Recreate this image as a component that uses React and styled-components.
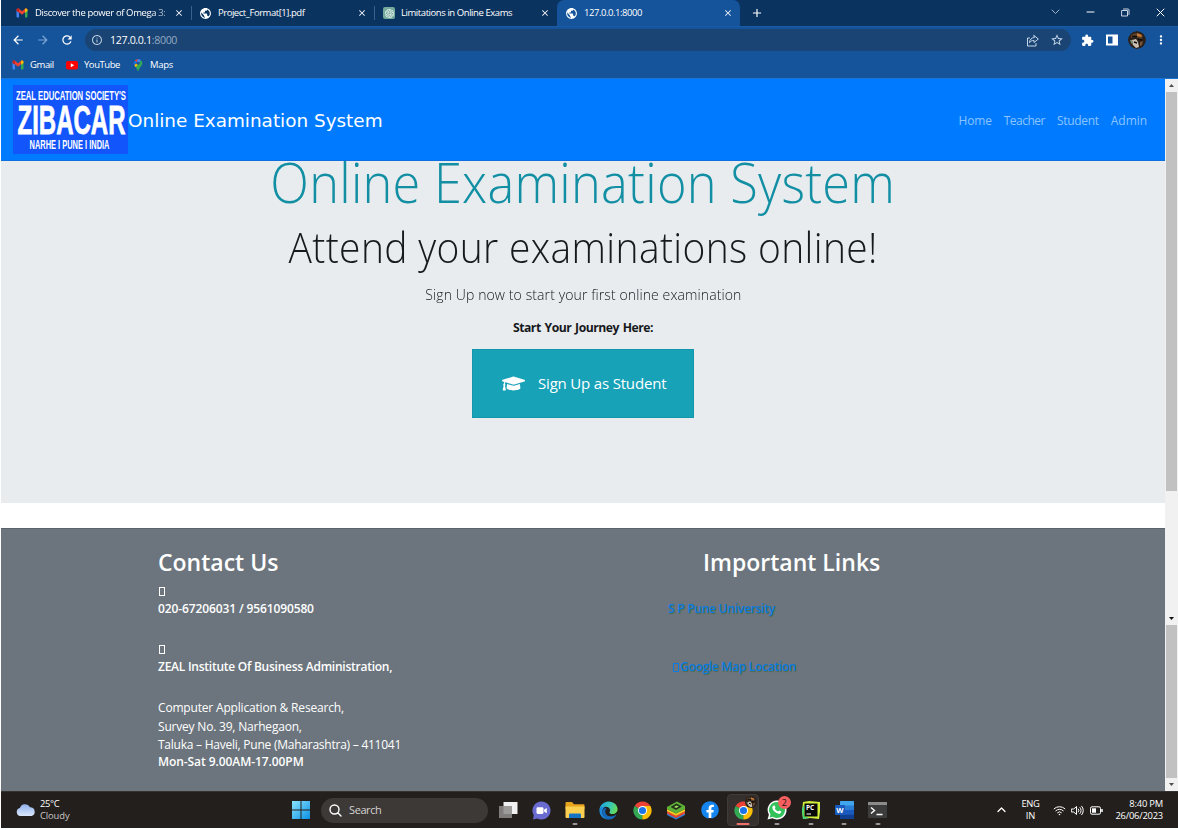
import React from "react";
import styled, { createGlobalStyle, css } from "styled-components";
import {
  MdPublic, MdArrowBack, MdArrowForward, MdRefresh, MdInfoOutline,
  MdStarBorder, MdExtension, MdMoreVert, MdClose, MdAdd,
} from "react-icons/md";
import { FaGraduationCap, FaFacebook } from "react-icons/fa";
import { SiOpenai } from "react-icons/si";

const UI = `"Open Sans", "Noto Sans", sans-serif`;

const Global = createGlobalStyle`
  *, *::before, *::after { box-sizing: border-box; }
  body { margin: 0; background: #fff; font-family: ${UI}; overflow: hidden; }
  svg { display: block; flex: none; }
`;

const Desktop = styled.div`
  width: 1178px;
  height: 830px;
  padding: 0 0 2px 1px;
  display: flex;
  flex-direction: column;
  overflow: hidden;
  white-space: nowrap;
`;

const Label = styled.span`
  font-size: ${(p) => p.$size}px;
  font-weight: ${(p) => p.$weight || 400};
  letter-spacing: ${(p) => p.$track || 0}px;
  color: ${(p) => p.$color || "inherit"};
  line-height: 1.2;
`;

/* ---------- browser chrome ---------- */

const TabStrip = styled.div`
  height: 26px;
  display: flex;
  padding-left: 7px;
  background: #0b335f;
  color: #fff;
`;

const TabBox = styled.div`
  position: relative;
  width: 183px;
  height: 26px;
  padding: 0 7px 0 8px;
  display: flex;
  align-items: center;
  border-radius: 7px 7px 0 0;
  ${(p) => p.$active && css`background: #15539b;`}
  ${(p) => p.$divider && css`
    &::after {
      content: "";
      position: absolute;
      right: -1px;
      top: 6px;
      width: 1px;
      height: 14px;
      background: #3a618c;
    }
  `}
`;

const Favicon = styled.span`
  width: 12px;
  margin-right: 7px;
  flex: none;
`;

const TabTitle = styled.div`
  flex: 1;
  overflow: hidden;
  display: flex;
  ${(p) => p.$fade && css`mask-image: linear-gradient(to right, #000 84%, rgba(0, 0, 0, 0.4) 97%);`}
`;

const OpenAiTile = styled.span`
  display: grid;
  place-items: center;
  width: 12px;
  height: 12px;
  margin-left: 1px;
  border-radius: 2px;
  background: #74aa9c;
`;

const NewTab = styled.div`
  display: grid;
  place-items: center;
  width: 34px;
`;

const WindowButtons = styled.div`
  margin-left: auto;
  display: flex;
  height: 24px;
`;

const WindowButton = styled.div`
  width: 35px;
  display: grid;
  place-items: center;
`;

const Toolbar = styled.div`
  height: 27px;
  display: flex;
  align-items: center;
  background: #15539b;
  border-top: 1px solid #1a5ba5;
  color: #fff;
`;

const NavButtons = styled.div`
  display: flex;
  align-items: center;
  gap: 10.5px;
  width: 84px;
  padding-left: 10px;
`;

const AddressBar = styled.div`
  width: 986px;
  height: 22px;
  border-radius: 11px;
  background: #1a4473;
  display: flex;
  align-items: center;
  padding: 0 7px 0 6px;
`;

const AddressText = styled.div`
  flex: 1;
  padding: 0 0 4px 7px;
`;

const AddressActions = styled.div`
  display: flex;
  align-items: center;
  gap: 11px;
  color: #c5d6e8;
`;

const Extensions = styled.div`
  display: flex;
  align-items: center;
  gap: 11px;
  padding-left: 10px;
`;

const Avatar = styled.span`
  width: 18px;
  height: 18px;
  margin: 0 -3px 0 -1px;
  border-radius: 50%;
  overflow: hidden;
`;

const Bookmarks = styled.div`
  height: 26px;
  display: flex;
  align-items: center;
  padding: 0 0 1px 11px;
  color: #fff;
  background: #15539b;
  border-bottom: 1px solid #1b74d2;
`;

const Bookmark = styled.div`
  display: flex;
  align-items: center;
  gap: 6px;
  width: ${(p) => p.$width}px;
`;

/* ---------- page ---------- */

const Viewport = styled.div`
  height: 712px;
  display: flex;
`;

const Page = styled.main`
  width: 1164px;
  display: flex;
  flex-direction: column;
`;

const Navbar = styled.nav`
  height: 81.5px;
  flex: none;
  display: flex;
  align-items: center;
  padding: 0 18px 0 12px;
  background: #007bff;
  border-bottom: 1px solid #0d6fe0;
  color: #fff;
`;

const Brand = styled.span`
  font: 400 18.4px "DejaVu Sans", Verdana, sans-serif;
  padding-top: 2px;
`;

const NavLinks = styled.div`
  margin-left: auto;
  padding-top: 3px;
  display: flex;
  gap: 12px;
  color: #8cc4ff;
`;

const Hero = styled.section`
  height: 342.5px;
  flex: none;
  background: #e8ecef;
  display: flex;
  flex-direction: column;
  align-items: center;
  color: #17191c;
`;

const Title = styled.h1`
  margin: -15px 0 0;
  font-weight: 300;
  font-size: 56px;
  line-height: 70px;
  letter-spacing: 0.3px;
  transform: scaleX(0.901);
  color: #138fa4;
`;

const Subtitle = styled.h2`
  margin: 1px 0 0;
  font-weight: 300;
  font-size: 43px;
  line-height: 60px;
  letter-spacing: 0.4px;
  transform: scaleX(0.906);
`;

const Lead = styled.p`
  margin: 6.5px 0 0;
  font-weight: 300;
  font-size: 15.4px;
  line-height: 24px;
  letter-spacing: 0.1px;
  transform: scaleX(0.912);
`;

const Prompt = styled.p`
  margin: 11px 0 0;
  font-weight: 700;
  font-size: 12.2px;
  line-height: 20px;
  letter-spacing: -0.5px;
  word-spacing: 1.2px;
`;

const SignUp = styled.button`
  width: 222px;
  height: 69px;
  margin: 10.5px 0 0;
  padding: 0 0 0 29px;
  display: flex;
  align-items: center;
  gap: 13px;
  border: 1px solid #1296ab;
  background: #17a2b8;
  color: #fff;
  font-family: inherit;
`;

const Footer = styled.footer`
  margin-top: 24.5px;
  flex: 1;
  display: flex;
  background: #6c757d;
  border-top: 1px solid #5a636b;
  color: #fff;
  padding: 17px 0 0 157px;
`;

const FooterColumn = styled.div`
  width: ${(p) => p.$width}px;
  display: flex;
  flex-direction: column;
`;

const FooterHeading = styled.h3`
  margin: 0 0 0 ${(p) => p.$indent || 0}px;
  font-size: 23px;
  line-height: 32px;
  font-weight: 600;
`;

const FooterLine = styled.div`
  height: ${(p) => p.$height}px;
  margin-top: ${(p) => p.$top || 0}px;
  display: flex;
  align-items: center;
`;

const MissingGlyph = styled.span`
  width: 6px;
  height: 9px;
  margin: 0 1px;
  border: 1px solid currentColor;
`;

const FooterLink = styled.a`
  display: flex;
  align-items: center;
  height: 18px;
  margin: ${(p) => p.$top}px 0 0 ${(p) => p.$indent}px;
  color: #0a7be0;
  text-shadow: 0.5px 0.5px 1px #4f6b4a;
`;

const ScrollColumn = styled.div`
  width: 13px;
  display: flex;
  flex-direction: column;
  align-items: center;
  background: #f1f1f1;
`;

const ScrollArrow = styled.div`
  height: ${(p) => p.$height}px;
  display: grid;
  place-items: center;
`;

const Thumb = styled.div`
  width: 11px;
  height: ${(p) => p.$height}px;
  margin-bottom: ${(p) => p.$gap || 0}px;
  background: #c1c1c1;
`;

/* ---------- taskbar ---------- */

const Taskbar = styled.div`
  height: 37px;
  display: flex;
  align-items: center;
  background: #231f1d;
  border-top: 1px solid #35322f;
  color: #fff;
`;

const Weather = styled.div`
  width: 283px;
  padding-left: 15px;
  display: flex;
  align-items: center;
  gap: 4px;
`;

const Stack = styled.div`
  display: flex;
  flex-direction: column;
  align-items: ${(p) => p.$align || "flex-start"};
  line-height: 12px;
  padding-bottom: 1px;
  ${Label} { line-height: 12px; }
`;

const StartButton = styled.div`
  width: 37px;
  padding-left: 8px;
`;

const SearchBox = styled.div`
  width: 167px;
  height: 25px;
  border-radius: 13px;
  background: #3d3937;
  display: flex;
  align-items: center;
  gap: 7px;
  padding-left: 8px;
  margin-right: 3px;
`;

const TaskButton = styled.div`
  position: relative;
  width: 33.65px;
  height: 32px;
  display: flex;
  align-items: center;
  justify-content: center;
  &::before {
    content: "";
    position: absolute;
    z-index: 0;
    inset: 0 1px;
    border-radius: 4px;
    ${(p) => p.$focused && css`background: #35302e; border: 1px solid #403b38;`}
  }
  &::after {
    content: "";
    position: absolute;
    bottom: 1px;
    left: 50%;
    height: 2px;
    border-radius: 1px;
    transform: translateX(-50%);
    width: ${(p) => (p.$focused ? 13 : p.$running ? 5 : 0)}px;
    background: ${(p) => (p.$focused ? "#f0706a" : "#9a9796")};
  }
  svg { position: relative; }
`;

const Badge = styled.span`
  position: absolute;
  right: 3px;
  top: 2px;
  width: 13px;
  height: 13px;
  border-radius: 50%;
  background: #f4605f;
  color: #2a0f0f;
  font-size: 9px;
  line-height: 13px;
  text-align: center;
`;

const MiniAvatar = styled.span`
  position: absolute;
  right: 3px;
  top: 2px;
`;

const Tray = styled.div`
  margin-left: auto;
  padding-right: 15px;
  display: flex;
  align-items: center;
`;

const TrayItem = styled.div`
  width: ${(p) => p.$width}px;
  display: flex;
  justify-content: ${(p) => p.$justify || "center"};
`;

/* ---------- drawings ---------- */

const GmailIcon = () => (
  <svg width="12" height="12" viewBox="0 0 24 24">
    <path d="M1 6v13a2 2 0 0 0 2 2h3V10z" fill="#4285f4" />
    <path d="M23 6v13a2 2 0 0 1-2 2h-3V10z" fill="#34a853" />
    <path d="M1 6c0-3 3-4 5-2.500l6 5 6-5c2-1.500 5-.500 5 2.500l-5 4.500-6 5-6-5z" fill="#ea4335" />
    <path d="M18 3.500c2-1.500 5-.500 5 2.500v2l-5 3.500z" fill="#fbbc04" />
    <path d="M6 3.500c-2-1.500-5-.500-5 2.500v2l5 3.500z" fill="#c5221f" />
  </svg>
);

const YouTubeIcon = () => (
  <svg width="12" height="12" viewBox="0 0 24 24">
    <rect x="0" y="4" width="24" height="17" rx="4" fill="#f00" />
    <path d="M9.500 8.500v8l7-4z" fill="#fff" />
  </svg>
);

const MapsIcon = () => (
  <svg width="12" height="12" viewBox="0 0 24 24">
    <path d="M12 0a8.500 8.500 0 0 0-6.500 3l4 3.400z" fill="#ea4335" />
    <path d="M12 0a8.500 8.500 0 0 1 6 2.400l-6 7-2.500-3z" fill="#4285f4" />
    <path d="M5.500 3A8.500 8.500 0 0 0 4.600 12.500L9.500 6.400z" fill="#1a73e8" />
    <path d="M18 2.400c3 3 3.200 6.500 1.700 9.700-1.700 3.500-5 5-6.200 10-.5 2.500-2.500 2.500-3 0-.5-2.200-1.500-4-3-5.600z" fill="#34a853" />
    <path d="M4.600 12.500c.8 1.500 1.800 2.700 2.900 4l6.500-7.500-3-2.500z" fill="#fbbc04" />
    <circle cx="12" cy="8.500" r="3.100" fill="#15539b" />
  </svg>
);

const Stroke = ({ w, h = w, d, sw = 1, color = "currentColor" }) => (
  <svg width={w} height={h} viewBox={`0 0 ${w} ${h}`} fill="none" stroke={color} strokeWidth={sw} strokeLinecap="round" strokeLinejoin="round">
    <path d={d} />
  </svg>
);

const ShareIcon = () => (
  <Stroke w={13} d="M3.500 4H1.500v8h8.500V9.500M8 1.500l4.300 3.500L8 8.500V6.500C6 6.500 4.700 7 3.500 8.700 3.800 5.500 5.500 3.700 8 3.500z" />
);

const SidePanelIcon = () => (
  <svg width="13" height="12" viewBox="-1 0 13 12">
    <path fillRule="evenodd" d="M0 .500h12v11H0zM2 2.500v7h4.500v-7z" fill="#fff" />
  </svg>
);

const AvatarPicture = ({ size = 18 }) => (
  <svg width={size} height={size} viewBox="0 0 18 18">
    <circle cx="9" cy="9" r="9" fill="#2b2019" />
    <path d="M3 4c4-3 9-2 12 1l-2 4-5-3-5 1z" fill="#5c4028" />
    <path d="M4 9l4-1 2 3 1 5-3 1-3-3z" fill="#c9bfb4" />
    <path d="M9 2l5 2-1 2-4-1z" fill="#c77a35" />
    <path d="M2 9l2 0 1 5-2-2z" fill="#7a8a70" />
    <path d="M4 5.500h5M10 8l4 1M6 11l3 1" stroke="#0d0a08" strokeWidth="1.500" />
    <path d="M12 11l3-1-1 4-2 1z" fill="#7a5433" />
  </svg>
);

const LogoArt = styled.svg`
  width: 115px;
  height: 69px;
  overflow: visible;
  fill: #fff;
  font-family: "Liberation Sans", sans-serif;
  font-weight: 700;
`;

const Logo = () => (
  <LogoArt viewBox="0 0 115 69">
    <rect width="115" height="69" fill="#1255fb" />
    <text x="3" y="15" fontSize="12.500" textLength="110" lengthAdjust="spacingAndGlyphs">ZEAL EDUCATION SOCIETY'S</text>
    <text x="4.500" y="49" fontSize="41" textLength="108" lengthAdjust="spacingAndGlyphs" stroke="#fff" strokeWidth=".8">ZIBACAR</text>
    <text x="16.500" y="64" fontSize="12.500" textLength="80" lengthAdjust="spacingAndGlyphs">NARHE I PUNE I INDIA</text>
  </LogoArt>
);

const CloudIcon = () => (
  <svg width="20" height="14" viewBox="0 0 20 14">
    <defs>
      <linearGradient id="cloud" x1="0" y1="0" x2="0" y2="1">
        <stop offset="0" stopColor="#8fb1ec" /><stop offset="1" stopColor="#dbe8fc" />
      </linearGradient>
    </defs>
    <path d="M4.500 13a4 4 0 0 1-.6-7.900A5.500 5.500 0 0 1 14 4.200 4.500 4.500 0 0 1 15.500 13z" fill="url(#cloud)" />
  </svg>
);

const WindowsIcon = () => (
  <svg width="18" height="18" viewBox="0 0 18 18">
    <defs>
      <linearGradient id="win" x1="0" y1="0" x2="1" y2="1">
        <stop offset="0" stopColor="#8be4fc" /><stop offset="1" stopColor="#0a8fe4" />
      </linearGradient>
    </defs>
    <path d="M0 0h8.500v8.500H0zM9.500 0H18v8.500H9.500zM0 9.500h8.500V18H0zM9.500 9.500H18V18H9.500z" fill="url(#win)" />
  </svg>
);

const TaskViewIcon = () => (
  <svg width="20" height="18" viewBox="0 0 20 18">
    <rect x="5.500" y="1" width="14" height="12" fill="#f1f1f1" />
    <rect x="1" y="5" width="13" height="12" fill="#8f8d8c" opacity=".85" />
  </svg>
);

const ChatIcon = () => (
  <svg width="19" height="19" viewBox="0 0 19 19">
    <path d="M9.500.500a9 9 0 1 1-4.300 16.900L1 18.500l.8-4.300A9 9 0 0 1 9.500.500z" fill="#6a6bd0" />
    <rect x="4.500" y="6.300" width="7" height="6.600" rx="1.300" fill="#fff" />
    <path d="M12 8.800l2.800-1.900v5.400L12 10.400z" fill="#fff" />
  </svg>
);

const FolderIcon = () => (
  <svg width="20" height="18" viewBox="0 0 20 18">
    <path d="M.5 2a1 1 0 0 1 1-1H7l2 2.200h9.500a1 1 0 0 1 1 1V8H.5z" fill="#e6a41c" />
    <path d="M.5 5.500h19V16a1 1 0 0 1-1 1h-17a1 1 0 0 1-1-1z" fill="#fbd050" />
    <path d="M4 17v-3.500a1 1 0 0 1 1-1h10a1 1 0 0 1 1 1V17z" fill="#1673c4" />
  </svg>
);

const EdgeIcon = () => (
  <svg width="19" height="19" viewBox="0 0 24 24">
    <defs>
      <linearGradient id="edgeTop" x1="0" y1=".2" x2="1" y2=".5">
        <stop offset="0" stopColor="#1ea0e4" /><stop offset=".55" stopColor="#36c7b8" /><stop offset="1" stopColor="#66dc58" />
      </linearGradient>
    </defs>
    <path d="M.5 11C1.200 5 6 .5 12 .5c6.800 0 11.500 4.700 11.500 9.700 0 3.800-3 6.300-6.300 6.300-2.600 0-4-1-4-2 0-.8.9-1.200.9-2.900 0-2.300-2.400-4.400-5.700-4.400C5 7.200 2 8.500.5 11z" fill="url(#edgeTop)" />
    <path d="M.5 12c0-3.200 3.600-5 7.400-4.800-2.400 1.200-3.700 3.800-3.700 6.600 0 4.700 3.700 8.600 8.800 9.600C6 24 .5 18.600.5 12z" fill="#1b8ade" />
    <path d="M9.500 9c-3 3.500-1.700 9.300 4.200 10.300 2.600.4 5.200-.3 7.400-1.600.5-.3.900.2.600.6-2 3-5 4.800-8.700 5.100C7.500 22.500 4.200 18.500 4.200 13.800c0-2.500 2.500-4.900 5.300-4.800z" fill="#1668b8" />
  </svg>
);

const ChromeIcon = () => (
  <svg width="19" height="19" viewBox="0 0 24 24">
    <path d="M12 12L2.040 6.250A11.500 11.500 0 0 1 21.960 6.250z" fill="#ea4335" />
    <path d="M12 12L21.960 6.250A11.500 11.500 0 0 1 12 23.500z" fill="#fbbc04" />
    <path d="M12 12L12 23.500A11.500 11.500 0 0 1 2.040 6.250z" fill="#34a853" />
    <path d="M12 6.300h10L17 14.800 12 23.500z" fill="#fbbc04" />
    <path d="M2.040 6.250L7.100 15 12 17.500 9 23z" fill="#34a853" />
    <circle cx="12" cy="12" r="5.700" fill="#fff" />
    <circle cx="12" cy="12" r="4.500" fill="#1a73e8" />
  </svg>
);

const BlueStacksIcon = () => (
  <svg width="20" height="19" viewBox="0 0 20 19">
    <path d="M1 12l9 4.500 9-4.500v2L10 18.500 1 14z" fill="#2f7fd6" />
    <path d="M1 10l9 4.500 9-4.500v2.500L10 17l-9-4.500z" fill="#e8452f" />
    <path d="M1 8l9 4.500L19 8v2.300l-9 4.500-9-4.500z" fill="#f4cb22" />
    <path d="M1 6l10-5.500L19 5v3l-9 4.500L1 8z" fill="#5fb336" />
    <path d="M4.500 6l6-3.500 5.500 3-6 3.500z" fill="#22321b" />
    <path d="M8 5.900l2.500-1.500 2.200 1.200-2.500 1.500z" fill="#a4e05f" />
  </svg>
);

const WhatsAppIcon = () => (
  <svg width="20" height="20" viewBox="0 0 20 20">
    <path d="M10 .5a9.500 9.500 0 1 1-4.600 17.800L.5 19.600l1.400-4.800A9.500 9.500 0 0 1 10 .5z" fill="#fff" />
    <path d="M10 2a8 8 0 1 1-4.400 14.700l-3 .8.900-2.900A8 8 0 0 1 10 2z" fill="#31c25a" />
    <path d="M6.800 5.600c.7-.4 1.100 0 1.500 1.300.3.900-.5 1.100-.4 1.500.6 1.300 1.700 2.300 3.200 2.900.5.100.8-1 1.300-.9 1.300.6 2 .8 1.900 1.300-.2 1.500-1.500 2.200-2.800 2-3.300-.6-6-3.400-6.200-6.100 0-.8.700-1.600 1.500-2z" fill="#fff" />
  </svg>
);

const PyCharmIcon = () => (
  <svg width="18" height="18" viewBox="0 0 18 18">
    <path d="M1 1l6-1 11 1v9l-1 8-9-1-7 1-1-8z" fill="#d3ee3a" />
    <path d="M0 8l2-4v11l5 2-6 1z" fill="#3fd87a" />
    <rect x="2.500" y="2.500" width="13" height="13" fill="#080808" />
    <text x="4" y="9" fontFamily="Open Sans, sans-serif" fontWeight="700" fontSize="6.500" fill="#fff">PC</text>
    <path d="M4.500 13h4.500" stroke="#fff" />
  </svg>
);

const WordIcon = () => (
  <svg width="19" height="18" viewBox="0 0 19 18">
    <rect x="5" y="0" width="14" height="18" rx="1" fill="#2b7cd3" />
    <path d="M5 1a1 1 0 0 1 1-1h12a1 1 0 0 1 1 1v3.500H5z" fill="#41a5ee" />
    <path d="M5 9h14v4.500H5z" fill="#185abd" />
    <path d="M5 13.500h14V17a1 1 0 0 1-1 1H6a1 1 0 0 1-1-1z" fill="#103f91" />
    <rect x="0" y="4" width="10" height="10" rx="1" fill="#185abd" />
    <text x="5" y="12" fontFamily="Open Sans, sans-serif" fontWeight="700" fontSize="7.500" textAnchor="middle" fill="#fff">W</text>
  </svg>
);

const TerminalIcon = () => (
  <svg width="19" height="16" viewBox="0 0 19 16">
    <rect width="19" height="16" rx="1" fill="#3c3c3d" />
    <rect width="19" height="3" fill="#8b8b8b" />
    <path d="M3 5.500l3.500 3-3.500 3M8.500 12.500h6" fill="none" stroke="#fff" strokeWidth="1.400" />
  </svg>
);

const FacebookDisc = styled.span`
  display: grid;
  border-radius: 50%;
  background: radial-gradient(#fff 60%, transparent 62%);
`;

const FacebookIcon = () => <FacebookDisc><FaFacebook size={18} color="#1485ee" /></FacebookDisc>;

const WifiIcon = () => (
  <svg width="13" height="11" viewBox="0 0 13 11" fill="none" stroke="#fff" strokeWidth="1">
    <path d="M.8 4a8.300 8.300 0 0 1 11.400 0M2.500 6a5.700 5.700 0 0 1 8 0M4.300 7.900a3.100 3.100 0 0 1 4.400 0" />
    <circle cx="6.500" cy="9.500" r=".8" fill="#fff" stroke="none" />
  </svg>
);

const VolumeIcon = () => (
  <Stroke w={13} h={11} color="#fff" d="M.7 4h2l2.800-2.500v8L2.700 7h-2zM7.300 4a2.200 2.200 0 0 1 0 3M9 2.500a4.300 4.300 0 0 1 0 6M10.700 1.200a6.300 6.300 0 0 1 0 8.600" />
);

const BatteryIcon = () => (
  <svg width="13" height="9" viewBox="0 0 13 9">
    <rect x=".500" y=".8" width="10" height="7.400" rx="1.500" fill="none" stroke="#fff" />
    <rect x="2" y="2.300" width="4" height="4.400" fill="#fff" />
    <path d="M12 3v3" stroke="#fff" strokeWidth="1.500" />
  </svg>
);

const Triangle = ({ up, color = "#505050" }) => (
  <svg width="5" height="3" viewBox="0 0 5 3">
    <path d={up ? "M0 3h5L2.500 0z" : "M0 0h5L2.500 3z"} fill={color} />
  </svg>
);

/* ---------- composition ---------- */

const Tab = ({ icon, title, track, active, divider, fade }) => (
  <TabBox $active={active} $divider={divider}>
    <Favicon>{icon}</Favicon>
    <TabTitle $fade={fade}><Label $size={9.5} $track={track}>{title}</Label></TabTitle>
    <MdClose size={10} />
  </TabBox>
);

const tabs = [
  { icon: <GmailIcon />, title: "Discover the power of Omega 3:", track: -0.38, divider: true, fade: true },
  { icon: <MdPublic size={13} />, title: "Project_Format[1].pdf", track: -0.46, divider: true },
  { icon: <OpenAiTile><SiOpenai size={9} /></OpenAiTile>, title: "Limitations in Online Exams", track: -0.43 },
  { icon: <MdPublic size={13} />, title: "127.0.0.1:8000", track: -0.45, active: true },
];

const navItems = [["Home", -0.2], ["Teacher", -0.5], ["Student", -0.3], ["Admin", -0.05]];

const apps = [
  { icon: <TaskViewIcon /> },
  { icon: <ChatIcon /> },
  { icon: <FolderIcon />, running: true },
  { icon: <EdgeIcon /> },
  { icon: <ChromeIcon /> },
  { icon: <BlueStacksIcon /> },
  { icon: <FacebookIcon /> },
  { icon: <ChromeIcon />, focused: true },
  { icon: <WhatsAppIcon />, running: true, badge: "2" },
  { icon: <PyCharmIcon />, running: true },
  { icon: <WordIcon />, running: true },
  { icon: <TerminalIcon />, running: true },
];

export default function App() {
  return (
    <Desktop>
      <Global />
      <TabStrip>
        {tabs.map((t) => <Tab key={t.title} {...t} />)}
        <NewTab><MdAdd size={14} /></NewTab>
        <WindowButtons>
          <WindowButton><Stroke w={9} h={6} d="M1 1l3.500 3.500L8 1" color="#9fb6d0" /></WindowButton>
          <WindowButton><Stroke w={9} h={2} d="M1 1h7" /></WindowButton>
          <WindowButton><Stroke w={9} color="#c9d5e3" d="M1 2.500h5.500V8H1zM2.500 1H7a1 1 0 0 1 1 1v4.500" /></WindowButton>
          <WindowButton><Stroke w={9} d="M1 1l7 7M8 1L1 8" /></WindowButton>
        </WindowButtons>
      </TabStrip>
      <Toolbar>
        <NavButtons>
          <MdArrowBack size={14} />
          <MdArrowForward size={14} color="#7fa6d4" />
          <MdRefresh size={14} />
        </NavButtons>
        <AddressBar>
          <MdInfoOutline size={12} color="#b9cade" />
          <AddressText>
            <Label $size={10.6} $track={-0.33}>127.0.0.1</Label>
            <Label $size={10.6} $track={-0.33} $color="#94abc4">:8000</Label>
          </AddressText>
          <AddressActions>
            <ShareIcon />
            <MdStarBorder size={14} />
          </AddressActions>
        </AddressBar>
        <Extensions>
          <MdExtension size={13} />
          <SidePanelIcon />
          <Avatar><AvatarPicture /></Avatar>
          <MdMoreVert size={14} />
        </Extensions>
      </Toolbar>
      <Bookmarks>
        <Bookmark $width={54}><GmailIcon /><Label $size={9.5} $track={-0.4}>Gmail</Label></Bookmark>
        <Bookmark $width={66}><YouTubeIcon /><Label $size={9.5} $track={-0.45}>YouTube</Label></Bookmark>
        <Bookmark $width={60}><MapsIcon /><Label $size={9.5} $track={-0.3}>Maps</Label></Bookmark>
      </Bookmarks>

      <Viewport>
        <Page>
          <Navbar>
            <Logo />
            <Brand>Online Examination System</Brand>
            <NavLinks>
              {navItems.map(([text, track]) => <Label key={text} $size={12} $track={track}>{text}</Label>)}
            </NavLinks>
          </Navbar>
          <Hero>
            <Title>Online Examination System</Title>
            <Subtitle>Attend your examinations online!</Subtitle>
            <Lead>Sign Up now to start your first online examination</Lead>
            <Prompt>Start Your Journey Here:</Prompt>
            <SignUp>
              <FaGraduationCap size={23} />
              <Label $size={15} $track={-0.18}>Sign Up as Student</Label>
            </SignUp>
          </Hero>
          <Footer>
            <FooterColumn $width={510}>
              <FooterHeading>Contact Us</FooterHeading>
              <FooterLine $top={5} $height={18}><MissingGlyph /></FooterLine>
              <FooterLine $height={18}><Label $size={12} $weight={600} $track={-0.12}>020-67206031 / 9561090580</Label></FooterLine>
              <FooterLine $top={22} $height={18}><MissingGlyph /></FooterLine>
              <FooterLine $height={18}><Label $size={12} $weight={600} $track={-0.25}>ZEAL Institute Of Business Administration,</Label></FooterLine>
              <FooterLine $top={23} $height={18}><Label $size={12} $track={-0.18}>Computer Application &amp; Research,</Label></FooterLine>
              <FooterLine $height={19}><Label $size={12} $track={-0.2}>Survey No. 39, Narhegaon,</Label></FooterLine>
              <FooterLine $height={18}><Label $size={12} $track={-0.24}>Taluka – Haveli, Pune (Maharashtra) – 411041</Label></FooterLine>
              <FooterLine $height={15}><Label $size={12} $weight={600} $track={-0.07}>Mon-Sat 9.00AM-17.00PM</Label></FooterLine>
            </FooterColumn>
            <FooterColumn $width={400}>
              <FooterHeading $indent={35}>Important Links</FooterHeading>
              <FooterLink $top={23} $indent={0}><Label $size={12} $weight={600} $track={-0.25}>S P Pune University</Label></FooterLink>
              <FooterLink $top={39.5} $indent={4}><MissingGlyph /><Label $size={12} $weight={600} $track={-0.3}>Google Map Location</Label></FooterLink>
            </FooterColumn>
          </Footer>
        </Page>
        <ScrollColumn>
          <ScrollArrow $height={13}><Triangle up /></ScrollArrow>
          <Thumb $height={399} $gap={121} />
          <ScrollArrow $height={13}><Triangle color="#111" /></ScrollArrow>
          <Thumb $height={153} />
          <ScrollArrow $height={13}><Triangle /></ScrollArrow>
        </ScrollColumn>
      </Viewport>

      <Taskbar>
        <Weather>
          <CloudIcon />
          <Stack>
            <Label $size={9.4} $track={-0.3}>25°C</Label>
            <Label $size={9.4} $track={-0.1} $color="#c9c7c6">Cloudy</Label>
          </Stack>
        </Weather>
        <StartButton><WindowsIcon /></StartButton>
        <SearchBox>
          <Stroke w={13} d="M10 5.500a4.500 4.500 0 1 1-9 0 4.500 4.500 0 0 1 9 0zM8.800 8.800L12 12" sw={1.4} color="#fff" />
          <Label $size={11} $track={-0.4} $color="#d5d3d2">Search</Label>
        </SearchBox>
        {apps.map((a, i) => (
          <TaskButton key={i} $running={a.running} $focused={a.focused}>
            {a.icon}
            {a.badge && <Badge>{a.badge}</Badge>}
            {a.focused && <MiniAvatar><AvatarPicture size={12} /></MiniAvatar>}
          </TaskButton>
        ))}
        <Tray>
          <TrayItem $width={18}><Stroke w={9} h={6} d="M1 4.500L4.500 1 8 4.500" sw={1.3} /></TrayItem>
          <TrayItem $width={41}>
            <Stack $align="center">
              <Label $size={9.4} $track={-0.3}>ENG</Label>
              <Label $size={9.4}>IN</Label>
            </Stack>
          </TrayItem>
          <TrayItem $width={17}><WifiIcon /></TrayItem>
          <TrayItem $width={19}><VolumeIcon /></TrayItem>
          <TrayItem $width={18}><BatteryIcon /></TrayItem>
          <TrayItem $width={58} $justify="flex-end">
            <Stack $align="flex-end">
              <Label $size={9.4} $track={-0.2}>8:40 PM</Label>
              <Label $size={9.4} $track={-0.22}>26/06/2023</Label>
            </Stack>
          </TrayItem>
        </Tray>
      </Taskbar>
    </Desktop>
  );
}
